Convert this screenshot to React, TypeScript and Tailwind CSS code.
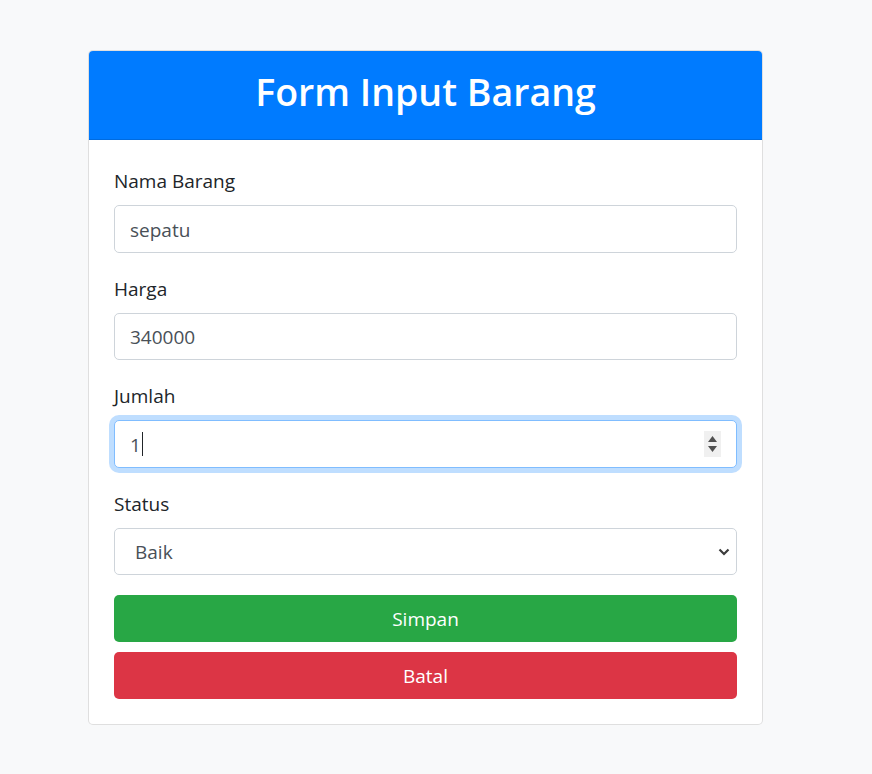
import React from "react";

const font = { fontFamily: '"Open Sans", "Noto Sans", sans-serif' };

function Label({ children }: { children: React.ReactNode }) {
  return <div className="mb-[10px] h-[30px] pt-[2px] text-[19px] leading-[28px] text-[#212529]">{children}</div>;
}

function TextBox({ value, h }: { value: string; h: string }) {
  return (
    <div className={`flex ${h} items-center rounded-[5px] border border-[#ced4da] bg-white px-[15px] pt-[2px] text-[19px] text-[#495057]`}>
      {value}
    </div>
  );
}

export default function App() {
  return (
    <div className="min-h-[774px] bg-[#f8f9fa] pl-[88px] pt-[50px]" style={font}>
      <div className="w-[675px] overflow-hidden rounded-[5px] border border-[rgba(0,0,0,0.125)] bg-white">
        <div className="flex h-[89px] items-start justify-center border-b border-[rgba(0,0,0,0.125)] bg-[#007bff] pt-[17px]">
          <h2 className="text-[37.5px] font-semibold leading-[48px] text-white">Form Input Barang</h2>
        </div>
        <div className="px-[25px] pb-[25px] pt-[25px]">
          <div className="mb-[20px]">
            <Label>Nama Barang</Label>
            <TextBox value="sepatu" h="h-[48px]" />
          </div>
          <div className="mb-[20px]">
            <Label>Harga</Label>
            <TextBox value="340000" h="h-[47px]" />
          </div>
          <div className="mb-[20px]">
            <Label>Jumlah</Label>
            <div className="flex h-[48px] items-center rounded-[5px] border border-[#80bdff] bg-white pl-[15px] pr-[15px] text-[19px] text-[#495057] shadow-[0_0_0_5px_rgba(0,123,255,0.25)]">
              <span className="pt-[2px]">1</span>
              <span className="ml-[1px] inline-block h-[24px] w-px bg-[#212529]" />
              <div className="ml-auto flex h-[26px] w-[17px] flex-col items-center justify-center gap-[4px] bg-[#f0f0f0]">
                <svg width="9" height="6" viewBox="0 0 9 6"><path d="M0 6 L4.5 0 L9 6 Z" fill="#505050" /></svg>
                <svg width="9" height="6" viewBox="0 0 9 6"><path d="M0 0 L9 0 L4.5 6 Z" fill="#505050" /></svg>
              </div>
            </div>
          </div>
          <div className="mb-[20px]">
            <Label>Status</Label>
            <div className="flex h-[47px] items-center rounded-[5px] border border-[#ced4da] bg-white pl-[20px] pr-[6px] text-[19px] text-[#495057]">
              <span className="pt-[2px]">Baik</span>
              <svg className="ml-auto" width="12" height="8" viewBox="0 0 12 8">
                <path d="M1.5 1.5 L6 6 L10.5 1.5" fill="none" stroke="#3c3c3c" strokeWidth="2.2" />
              </svg>
            </div>
          </div>
          <button className="flex h-[47px] w-full items-center justify-center rounded-[5px] bg-[#28a745] pt-[2px] text-[19px] text-white">
            Simpan
          </button>
          <button className="mt-[10px] flex h-[47px] w-full items-center justify-center rounded-[5px] bg-[#dc3545] pt-[2px] text-[19px] text-white">
            Batal
          </button>
        </div>
      </div>
    </div>
  );
}
